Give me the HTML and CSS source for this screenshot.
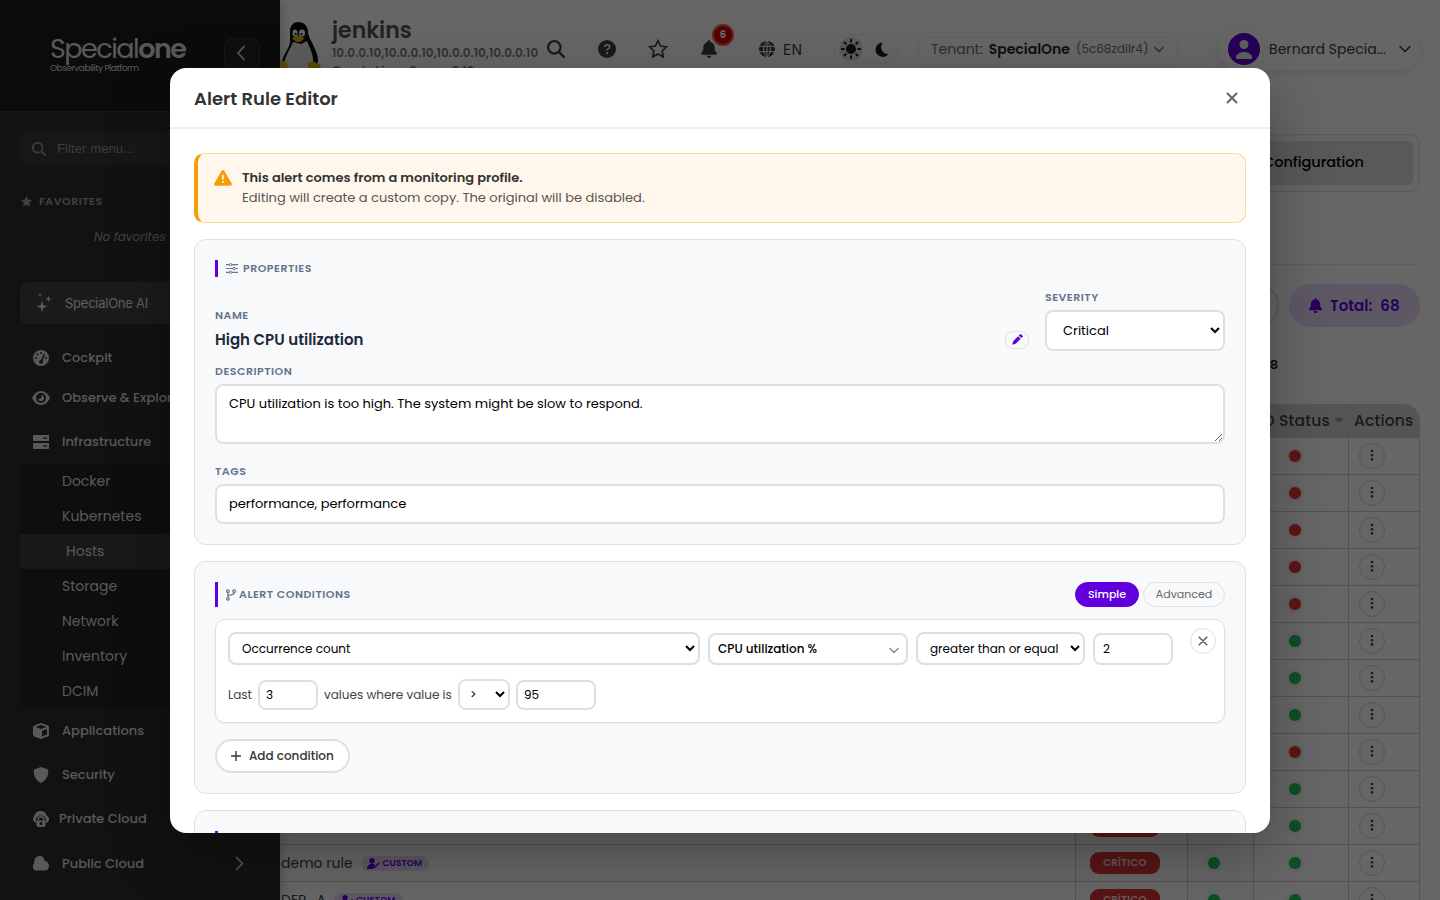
FILE: index.html
```html
<!DOCTYPE html>
<html lang="en">
<head>
    <meta charset="UTF-8">
    <meta name="viewport" content="width=device-width, initial-scale=1.0">
    <title>Alert Rule Editor</title>
    <link rel="stylesheet" href="styles.css">
</head>

<body>

    <svg class="sprite" aria-hidden="true">
        <symbol id="i-search" viewBox="0 0 512 512"><path d="M416 208c0 46-15 88-40 123l127 126c12 13 12 33 0 46s-33 12-46 0L331 376c-35 25-77 40-123 40C93 416 0 323 0 208S93 0 208 0s208 93 208 208zM208 352a144 144 0 1 0 0-288 144 144 0 1 0 0 288z"/></symbol>
        <symbol id="i-bell" viewBox="0 0 448 512"><path d="M224 0c-18 0-32 14-32 32v19C119 66 64 130 64 208v19c0 47-17 92-48 127l-8 9c-8 9-10 23-5 34s16 19 29 19h384c13 0 24-8 29-19s3-25-5-34l-8-9c-31-35-48-80-48-127v-19c0-78-55-142-128-157V32c0-18-14-32-32-32zm45 493c12-12 19-28 19-45H160c0 17 7 33 19 45s28 19 45 19 33-7 45-19z"/></symbol>
        <symbol id="i-x" viewBox="0 0 12 12"><path d="M1.500 1.500l9 9M10.500 1.500l-9 9" fill="none" stroke="currentColor" stroke-width="2" stroke-linecap="round"/></symbol>
        <symbol id="i-down" viewBox="0 0 12 8"><path d="M1 1.500l5 5 5-5" fill="none" stroke="currentColor" stroke-width="1.600" stroke-linecap="round" stroke-linejoin="round"/></symbol>
        <symbol id="i-star" viewBox="0 0 24 24"><path d="M12 2l3.100 6.500 7 .9-5.100 4.900 1.300 7.100L12 18l-6.300 3.400L7 14.300 1.900 9.400l7-.9z"/></symbol>
        <symbol id="i-dots" viewBox="0 0 4 14"><circle cx="2" cy="2" r="1.300"/><circle cx="2" cy="6.200" r="1.300"/><circle cx="2" cy="10.400" r="1.300"/></symbol>
    </svg>

    <div class="layout">
        <aside class="sidebar">
            <div class="sidebar-header">
                <div class="logo">
                    <div class="logo-name">Special<b>one</b></div>
                    <div class="logo-sub">Observability Platform</div>
                </div>
                <button class="collapse"><svg width="10" height="16" viewBox="0 0 10 16"><path d="M8 1.500L2 8l6 6.500" fill="none" stroke="currentColor" stroke-width="1.800" stroke-linecap="round" stroke-linejoin="round"/></svg></button>
            </div>

            <div class="filter">
                <svg width="14" height="14"><use href="#i-search"/></svg>
                <span>Filter menu...</span>
            </div>

            <div class="fav-title"><svg width="13" height="13"><use href="#i-star"/></svg>FAVORITES</div>
            <div class="fav-empty">No favorites yet</div>

            <div class="ai">
                <svg width="18" height="20" viewBox="0 0 18 20"><path d="M7 8l1.300 4.200L12.500 13.500l-4.200 1.300L7 19l-1.300-4.200L1.500 13.500l4.200-1.300zM13.500 3l.8 2.200 2.200.8-2.200.8-.8 2.200-.8-2.200-2.200-.8 2.200-.8zM5 0l.5 1.500L7 2l-1.500.5L5 4l-.5-1.500L3 2l1.500-.5z"/></svg>
                <span>SpecialOne AI</span>
            </div>

            <nav class="menu">
                <a class="item first"><svg width="16" height="16" viewBox="0 0 16 16"><path fill-rule="evenodd" d="M8 0a8 8 0 1 1 0 16A8 8 0 0 1 8 0zM8 2a1 1 0 1 0 0 2 1 1 0 0 0 0-2zM4.300 3.500a1 1 0 1 0 0 2 1 1 0 0 0 0-2zM3 7a1 1 0 1 0 0 2 1 1 0 0 0 0-2zM13 7a1 1 0 1 0 0 2 1 1 0 0 0 0-2zM11 3.600L8.300 9.800a2 2 0 1 0 1.300.7L12.200 4.200z"/></svg><span>Cockpit</span></a>
                <a class="item eye"><svg width="18" height="14" viewBox="0 0 18 14"><path fill-rule="evenodd" d="M9 0c4 0 7 3 9 7-2 4-5 7-9 7s-7-3-9-7c2-4 5-7 9-7zM9 2a5 5 0 1 0 0 10A5 5 0 0 0 9 2zM9 4a3 3 0 1 1-3 3.200A2 2 0 0 0 9 4z"/></svg><span>Observe &amp; Explore</span></a>
                <a class="item"><svg width="16" height="14" viewBox="0 0 16 14"><path fill-rule="evenodd" d="M1 0h14a1 1 0 0 1 1 1v5H0V1a1 1 0 0 1 1-1zM10 2.500v1.300h4V2.500zM0 8h16v5a1 1 0 0 1-1 1H1a1 1 0 0 1-1-1zM10 10.500v1.300h4v-1.300z"/></svg><span>Infrastructure</span></a>
                <div class="submenu">
                    <a>Docker</a>
                    <a>Kubernetes</a>
                    <a class="active">Hosts</a>
                    <a>Storage</a>
                    <a>Network</a>
                    <a>Inventory</a>
                    <a>DCIM</a>
                </div>
                <a class="item apps"><svg width="16" height="16" viewBox="0 0 16 16"><path fill-rule="evenodd" d="M8 0l7 2.500 1 1.500v8l-1 1.500L8 16l-7-2.500L0 12V4l1-1.500zM8 2L2.500 4 8 6l5.500-2zM9 8v5.500l5-1.900V6z"/></svg><span>Applications</span></a>
                <a class="item"><svg width="16" height="16" viewBox="0 0 16 16"><path d="M8 0l7 2.600c1 4.400-1 10.400-7 13.400C2 13 0 7 1 2.600z"/></svg><span>Security</span></a>
                <a class="item private"><svg width="16" height="16" viewBox="0 0 16 16"><path fill-rule="evenodd" d="M3 12a4 4 0 0 1-2-6.500C2 2 4 0 7.500 0S13 2 13.500 4.500C17 6 17 11 13 12V9.500a5 5 0 0 0-10 0zM8 5a3.500 3.500 0 0 1 3.500 3.500v1h1V14c0 1-1 2-2 2h-5c-1 0-2-1-2-2V9.500h1v-1A3.500 3.500 0 0 1 8 5zm0 1.600c-1.200 0-2 .8-2 1.900v1h4v-1c0-1.100-.8-1.900-2-1.900zm0 4.400a1.500 1.500 0 1 0 0 3 1.500 1.500 0 0 0 0-3z"/></svg><span>Private Cloud</span></a>
                <a class="item public"><svg width="16" height="15" viewBox="0 0 16 15"><path d="M4 14.500a4 4 0 0 1-3-7C1 3 3 0 6.500 0s5 2 5 5C14 5 16 7 16 10s-2 4.500-4 4.500z"/></svg><span>Public Cloud</span>
                    <svg class="arrow" width="9" height="15" viewBox="0 0 9 15"><path d="M1.500 1.500l6 6-6 6" fill="none" stroke="currentColor" stroke-width="1.500" stroke-linecap="round"/></svg></a>
            </nav>
        </aside>

        <main class="main">
            <header class="topbar">
                <svg class="tux" width="42" height="50" viewBox="0 0 42 50">
                    <path fill="#0c0c0c" d="M18 0c6 0 10 4 10 10 0 7 10 17 10 29l-2 11H2l-1-8c2-9 9-17 9-22V9c0-5 3-9 8-9z"/>
                    <path fill="#e6e6e6" d="M13 20l8 2 6-3c3 8 7 14 6 22l-5 9H6L4 42c1-8 6-14 9-22z"/>
                    <ellipse cx="15" cy="11" rx="2.500" ry="3.500" fill="#fff"/><ellipse cx="22" cy="11" rx="3" ry="3.500" fill="#fff"/>
                    <circle cx="15.500" cy="12" r="1.200"/><circle cx="21.500" cy="12" r="1.200"/>
                    <path fill="#e8b010" d="M12 16l6-3 7 3-5 4h-4zM0 38l6 2 4 10H0zM28 41l5-2 7 4 2 7H28z"/>
                </svg>
                <div class="host">
                    <h1>jenkins</h1>
                    <p class="ips">10.0.0.10,10.0.0.10,10.0.0.10,10.0.0.10</p>
                    <p class="os">Oracle Linux Server 8.10</p>
                </div>
                <div class="tools">
                    <svg width="18" height="18"><use href="#i-search"/></svg>
                    <svg width="18" height="18" viewBox="0 0 18 18"><circle cx="9" cy="9" r="9"/><path d="M6.700 7c.2-3 4.900-3 4.900-.1C11.600 8.700 9.100 8.600 9.100 10.500" fill="none" stroke="#f5f5f5" stroke-width="1.700"/><circle cx="9.100" cy="13.200" r="1.100" fill="#f5f5f5"/></svg>
                    <svg width="20" height="20" viewBox="0 0 24 24"><path d="M12 2l3.100 6.500 7 .9-5.100 4.900 1.300 7.100L12 18l-6.300 3.400L7 14.300 1.900 9.400l7-.9z" fill="none" stroke="currentColor" stroke-width="2"/></svg>
                    <div class="bell"><svg width="16" height="18"><use href="#i-bell"/></svg><span class="badge">6</span></div>
                </div>
                <div class="lang">
                    <svg width="16" height="16" viewBox="0 0 16 16"><circle cx="8" cy="8" r="8"/><path d="M0 5.300h16M0 10.700h16M8 0v16M8 0C3.500 4 3.500 12 8 16M8 0c4.500 4 4.500 12 0 16" fill="none" stroke="#fff" stroke-width="1"/></svg>
                    <span>EN</span>
                </div>
                <div class="theme">
                    <span class="sun"><svg width="20" height="20" viewBox="0 0 20 20"><circle cx="10" cy="10" r="5"/><path d="M10 .8v2M10 17.200v2M.8 10h2M17.200 10h2M3.500 3.500l1.200 1.200M15.300 15.300l1.200 1.200M3.500 16.500l1.200-1.200M15.300 4.700l1.200-1.200" stroke="currentColor" stroke-width="2" stroke-linecap="round"/></svg></span>
                    <svg width="14" height="15" viewBox="0 0 14 15"><path d="M8 .5A7.200 7.200 0 1 0 13.500 12C7 12.500 4 5 8 .5z"/></svg>
                </div>
                <div class="tenant"><span>Tenant:</span><b>SpecialOne</b><small>(5c68zdilr4)</small><svg width="10" height="7"><use href="#i-down"/></svg></div>
                <div class="user">
                    <span class="avatar"><svg width="16" height="19" viewBox="0 0 16 19"><circle cx="8" cy="4.500" r="4.500"/><path d="M0 18c0-8 16-8 16 0 0 1-.5 1-1 1H1c-.5 0-1 0-1-1z"/></svg></span>
                    <span class="user-name">Bernard Specia...</span>
                    <svg width="12" height="8"><use href="#i-down"/></svg>
                </div>
            </header>

            <div class="tabs"><div class="tab">Configuration</div></div>

            <div class="stats">
                <div class="search-pill"></div>
                <div class="total"><svg width="13" height="15"><use href="#i-bell"/></svg><span>Total:</span><b>68</b></div>
            </div>
            <div class="count">68</div>

            <div class="table">
                <div class="row head"><div></div><div></div><div></div><div class="status-head">IO Status <i></i></div><div>Actions</div></div>
                <div class="row"><div></div><div></div><div></div><div><i class="dot red"></i></div><div><span class="more"><svg width="4" height="14"><use href="#i-dots"/></svg></span></div></div>
                <div class="row"><div></div><div></div><div></div><div><i class="dot red"></i></div><div><span class="more"><svg width="4" height="14"><use href="#i-dots"/></svg></span></div></div>
                <div class="row"><div></div><div></div><div></div><div><i class="dot red"></i></div><div><span class="more"><svg width="4" height="14"><use href="#i-dots"/></svg></span></div></div>
                <div class="row"><div></div><div></div><div></div><div><i class="dot red"></i></div><div><span class="more"><svg width="4" height="14"><use href="#i-dots"/></svg></span></div></div>
                <div class="row"><div></div><div></div><div></div><div><i class="dot red"></i></div><div><span class="more"><svg width="4" height="14"><use href="#i-dots"/></svg></span></div></div>
                <div class="row"><div></div><div></div><div></div><div><i class="dot"></i></div><div><span class="more"><svg width="4" height="14"><use href="#i-dots"/></svg></span></div></div>
                <div class="row"><div></div><div></div><div></div><div><i class="dot"></i></div><div><span class="more"><svg width="4" height="14"><use href="#i-dots"/></svg></span></div></div>
                <div class="row"><div></div><div></div><div></div><div><i class="dot"></i></div><div><span class="more"><svg width="4" height="14"><use href="#i-dots"/></svg></span></div></div>
                <div class="row"><div></div><div></div><div></div><div><i class="dot red"></i></div><div><span class="more"><svg width="4" height="14"><use href="#i-dots"/></svg></span></div></div>
                <div class="row"><div></div><div></div><div></div><div><i class="dot"></i></div><div><span class="more"><svg width="4" height="14"><use href="#i-dots"/></svg></span></div></div>
                <div class="row"><div></div><div><span class="sev">CRÍTICO</span></div><div></div><div><i class="dot"></i></div><div><span class="more"><svg width="4" height="14"><use href="#i-dots"/></svg></span></div></div>
                <div class="row"><div>demo rule <span class="custom"><svg width="13" height="11" viewBox="0 0 13 11"><circle cx="5" cy="2.700" r="2.700"/><path d="M0 11c0-6 7-6 8-4l-2 4zM12 4l1 1-5 5-1.500.5.500-1.500z"/></svg>CUSTOM</span></div><div><span class="sev">CRÍTICO</span></div><div><i class="dot"></i></div><div><i class="dot"></i></div><div><span class="more"><svg width="4" height="14"><use href="#i-dots"/></svg></span></div></div>
                <div class="row"><div>DEP_A <span class="custom"><svg width="13" height="11" viewBox="0 0 13 11"><circle cx="5" cy="2.700" r="2.700"/><path d="M0 11c0-6 7-6 8-4l-2 4zM12 4l1 1-5 5-1.500.5.500-1.500z"/></svg>CUSTOM</span></div><div><span class="sev">CRÍTICO</span></div><div><i class="dot"></i></div><div><i class="dot"></i></div><div><span class="more"><svg width="4" height="14"><use href="#i-dots"/></svg></span></div></div>
            </div>
        </main>
    </div>

    <div class="overlay">
        <div class="modal">
            <div class="modal-header">
                <h2>Alert Rule Editor</h2>
                <button class="close"><svg width="12" height="12"><use href="#i-x"/></svg></button>
            </div>

            <div class="modal-body">
                <div class="notice">
                    <svg width="18" height="16" viewBox="0 0 18 16"><path fill-rule="evenodd" d="M9 0c.5 0 1 .3 1.300.7l7.400 12.700c.6 1.200-.1 2.300-1.300 2.300H1.600c-1.200 0-1.900-1.100-1.300-2.300L7.700.7C8 .3 8.500 0 9 0zM8.200 4.800v4.700h1.600V4.800zM9 10.900a1 1 0 1 0 0 2 1 1 0 0 0 0-2z"/></svg>
                    <div>
                        <strong>This alert comes from a monitoring profile.</strong>
                        <p>Editing will create a custom copy. The original will be disabled.</p>
                    </div>
                </div>

                <section class="section properties">
                    <h3 class="section-title"><svg width="12" height="11" viewBox="0 0 12 11"><path d="M0 1.700h3M6 1.700h6M0 5.500h6.500M9.500 5.500H12M0 9.300h3M6 9.300h6" stroke="currentColor" stroke-width="1.200" stroke-linecap="round"/><g fill="none" stroke="currentColor"><circle cx="4.500" cy="1.700" r="1.200"/><circle cx="8" cy="5.500" r="1.200"/><circle cx="4.500" cy="9.300" r="1.200"/></g></svg>PROPERTIES</h3>
                    <div class="name-row">
                        <div class="name-field">
                            <label>NAME</label>
                            <div class="name-line"><span class="name">High CPU utilization</span>
                                <button class="edit"><svg width="11" height="11" viewBox="0 0 11 11"><path d="M7.800.5c.5-.5 1.100-.5 1.600 0l1 1c.5.500.5 1.100 0 1.600l-1 1L6.800 1.500zM6.100 2.200l2.600 2.600-5 5L.2 10.800l1-3.600z"/></svg></button>
                            </div>
                        </div>
                        <div class="severity">
                            <label>SEVERITY</label>
                            <select><option>Critical</option></select>
                        </div>
                    </div>
                    <label>DESCRIPTION</label>
                    <textarea>CPU utilization is too high. The system might be slow to respond.</textarea>
                    <label class="tags-label">TAGS</label>
                    <input class="tags" type="text" value="performance, performance">
                </section>

                <section class="section conditions">
                    <div class="section-title">
                        <svg width="10" height="12" viewBox="0 0 10 12"><path d="M1.900 3.500v5M1.900 7c0-1.500 6.200 0 6.200-3.500" fill="none" stroke="currentColor" stroke-width="1.300"/><g fill="none" stroke="currentColor" stroke-width="1.200"><circle cx="1.900" cy="2.200" r="1.300"/><circle cx="8.100" cy="2.200" r="1.300"/><circle cx="1.900" cy="9.800" r="1.300"/></g></svg>
                        <span>ALERT CONDITIONS</span>
                        <div class="modes"><button class="mode on">Simple</button><button class="mode">Advanced</button></div>
                    </div>
                    <div class="card">
                        <div class="cond-row">
                            <select class="type"><option>Occurrence count</option></select>
                            <div class="metric"><span>CPU utilization %</span><svg width="10" height="7"><use href="#i-down"/></svg></div>
                            <select class="op"><option>greater than or equal</option></select>
                            <input class="count-val" type="text" value="2">
                            <button class="remove"><svg width="10" height="10"><use href="#i-x"/></svg></button>
                        </div>
                        <div class="last-row">
                            <span class="last">Last</span>
                            <input class="n" type="text" value="3">
                            <span class="where">values where value is</span>
                            <select class="cmp"><option>&gt;</option></select>
                            <input class="v" type="text" value="95">
                        </div>
                    </div>
                    <button class="add"><svg width="10" height="10" viewBox="0 0 10 10"><path d="M5 .5v9M.5 5h9" stroke="currentColor" stroke-width="1.400" stroke-linecap="round"/></svg>Add condition</button>
                </section>

                <section class="section next"><div class="section-title"></div></section>
            </div>
        </div>
    </div>

</body>

</html>
```
FILE: styles.css
```css
* {
    margin: 0;
    padding: 0;
    box-sizing: border-box;
}

body {
    font-family: Poppins, Inter, sans-serif;
    background-color: #fff;
    color: #333;
    height: 900px;
    overflow: hidden;
}

button, input, select, textarea {
    font-family: inherit;
}

svg {
    fill: currentColor;
    flex-shrink: 0;
}

.sprite {
    display: none;
}

.layout {
    display: flex;
    height: 900px;
    overflow: hidden;
}

/* sidebar */
.sidebar {
    width: 280px;
    flex-shrink: 0;
    background-color: #2e2e2e;
    color: #dedede;
    box-shadow: 2px 0 10px rgba(0, 0, 0, 0.2);
}

.sidebar-header {
    display: flex;
    justify-content: space-between;
    height: 112px;
    padding: 36px 20px 0 50px;
    background-color: #1c1c1c;
    border-bottom: 1px solid #3c3c3c;
}

.logo {
    white-space: nowrap;
}

.logo-name {
    font-size: 27px;
    line-height: 26px;
    letter-spacing: -1.500px;
}

.logo-name b {
    font-weight: 600;
}

.logo-sub {
    font-size: 9px;
    line-height: 12px;
    letter-spacing: -0.500px;
}

.collapse {
    width: 36px;
    height: 36px;
    margin-top: 2px;
    padding-right: 2px;
    background-color: #262626;
    border: 1px solid #3a3a3a;
    border-radius: 8px;
    color: #ddd;
}

.filter {
    display: flex;
    align-items: center;
    gap: 11px;
    height: 33px;
    margin: 20px 20px 0;
    padding-left: 12px;
    background-color: #3a3a3a;
    border-radius: 8px;
    font-family: "Liberation Sans", sans-serif;
    font-size: 13px;
    letter-spacing: 0.100px;
    color: #999;
}

.fav-title {
    display: flex;
    align-items: center;
    gap: 6px;
    height: 20px;
    margin: 26px 20px 0;
    font-size: 11px;
    font-weight: 600;
    letter-spacing: 0.500px;
    color: #a0a0a0;
}

.fav-empty {
    margin-top: 16px;
    padding-left: 94px;
    font-size: 12px;
    line-height: 20px;
    font-style: italic;
    color: #a0a0a0;
}

.ai {
    display: flex;
    align-items: center;
    gap: 12px;
    height: 42px;
    margin: 35px 20px 0;
    padding-left: 15px;
    background-color: #454545;
    border-radius: 8px;
    font-family: Inter, sans-serif;
    font-size: 13px;
    letter-spacing: -0.250px;
    color: #e5e5e5;
}

.menu {
    padding: 15px 20px 0;
    font-size: 14px;
}

.item {
    display: flex;
    align-items: center;
    height: 44px;
    padding: 1px 0 0 13px;
    font-size: 13px;
    font-weight: 500;
}

.item svg {
    width: 16px;
    margin-right: 13px;
}

.item.first {
    height: 36px;
}

.item.eye {
    padding-left: 12px;
}

.item.eye svg {
    width: 18px;
    margin-right: 12px;
}

.item.apps {
    height: 43px;
    padding-top: 0;
}

.item.private svg {
    margin-right: 10px;
}

.item.public {
    margin-top: 1px;
}

.item .arrow {
    width: 9px;
    margin: 0 16px 0 auto;
}

.submenu {
    margin-top: 1px;
    background-color: #242424;
    border-radius: 8px;
    overflow: hidden;
}

.submenu a {
    display: block;
    height: 35px;
    padding-left: 42px;
    line-height: 35px;
}

.submenu .active {
    padding-left: 46px;
    background-color: #3c3c3c;
}

/* page behind the editor */
.main {
    flex: 1;
    min-width: 0;
    padding-right: 20px;
}

.topbar {
    display: flex;
    height: 98px;
    padding-top: 17px;
    color: #404040;
}

.tux {
    margin-top: 5px;
}

.host {
    width: 225px;
    padding-left: 10px;
    white-space: nowrap;
}

.host h1 {
    font-size: 22px;
    font-weight: 600;
    line-height: 28px;
    color: #555;
}

.host p {
    font-size: 12px;
    font-weight: 600;
    line-height: 16px;
    letter-spacing: 0.020px;
    color: #808080;
}

.host .os {
    line-height: 20px;
}

.tools {
    display: flex;
    align-items: center;
    gap: 33px;
    height: 64px;
}

.tools > svg:nth-child(3) {
    margin-left: -1px;
}

.bell {
    position: relative;
    height: 18px;
}

.badge {
    position: absolute;
    top: -25px;
    left: 11px;
    width: 22px;
    height: 22px;
    margin-top: 9px;
    border: 2px solid #ff5555;
    border-radius: 50%;
    background-color: #d80000;
    color: #fff;
    font-size: 10px;
    font-weight: 700;
    line-height: 18px;
    text-align: center;
}

.lang {
    display: flex;
    align-items: center;
    gap: 8px;
    height: 64px;
    margin-left: 42px;
    font-family: Inter, sans-serif;
    font-size: 14px;
}

.theme {
    display: flex;
    align-items: center;
    gap: 12px;
    width: 64px;
    height: 30px;
    margin: 17px 0 0 32px;
    padding-left: 4px;
    border: 1px solid #f2f2f2;
    border-radius: 15px;
    color: #1a1a2a;
}

.sun {
    display: flex;
    align-items: center;
    justify-content: center;
    width: 24px;
    height: 24px;
    background-color: #e2e2e2;
    border-radius: 50%;
}

.tenant {
    display: flex;
    align-items: center;
    gap: 6px;
    width: 260px;
    height: 34px;
    margin: 15px 0 0 20px;
    padding-left: 12px;
    border: 1px solid #f0f0f2;
    border-radius: 8px;
    font-size: 14px;
    color: #64748b;
    white-space: nowrap;
}

.tenant b {
    color: #1e293b;
    font-weight: 600;
}

.tenant small {
    font-size: 12px;
}

.user {
    display: flex;
    align-items: center;
    width: 202px;
    height: 42px;
    margin: 11px 0 0 auto;
    padding-left: 10px;
    border-radius: 21px;
    box-shadow: 0 2px 8px rgba(0, 0, 0, 0.1);
    font-size: 14px;
    white-space: nowrap;
}

.avatar {
    display: flex;
    align-items: center;
    justify-content: center;
    width: 32px;
    height: 32px;
    margin-right: 9px;
    background-color: #6200dd;
    border-radius: 50%;
    color: #f0f0f0;
}

.user-name {
    width: 130px;
    letter-spacing: 0.050px;
}

.tabs {
    height: 58px;
    margin-top: 36px;
    padding: 6px;
    border: 1px solid #dde2ea;
    border-radius: 10px;
    background-color: #f8f9fb;
}

.tab {
    height: 44px;
    margin-left: 680px;
    padding-right: 49px;
    background-color: #dedede;
    border-radius: 6px;
    color: #000;
    font-size: 14.500px;
    font-weight: 500;
    line-height: 42px;
    text-align: right;
}

.stats {
    display: flex;
    justify-content: flex-end;
    gap: 10px;
    height: 63px;
    margin-top: 72px;
    padding-top: 19px;
    border-top: 1px solid #e5e5e5;
}

.search-pill {
    width: 300px;
    height: 43px;
    border: 2px solid #e0e0e0;
    border-radius: 22px;
}

.total {
    display: flex;
    align-items: center;
    width: 131px;
    height: 43px;
    padding-left: 20px;
    background-color: #e9dcfa;
    border-radius: 22px;
    color: #6200dd;
    font-size: 15px;
    font-weight: 600;
}

.total span {
    margin: 0 8px 0 8px;
}

.total b {
    font-weight: 600;
}

.count {
    height: 20px;
    margin: 28px 142px 0 0;
    font-size: 13px;
    font-weight: 600;
    line-height: 20px;
    text-align: right;
    color: #1e293b;
}

.table {
    margin-top: 29px;
    border-right: 1px solid #d5d5d5;
    border-radius: 0 16px 0 0;
    overflow: hidden;
}

.row {
    display: grid;
    grid-template-columns: 796px 112px 66px 95px 70px;
    height: 37px;
    border-bottom: 1px solid #ccc;
    font-size: 14px;
    color: #444;
}

.row div {
    display: flex;
    align-items: center;
    padding-left: 14px;
    border-right: 1px solid #ccc;
    white-space: nowrap;
}

.row div:first-child {
    padding-left: 1px;
}

.row div:nth-child(3) {
    padding-left: 20px;
}

.row div:nth-child(4) {
    padding-left: 35px;
}

.row div:last-child {
    padding-left: 10px;
    border-right: none;
}

.row.head {
    height: 34px;
    background-color: #d4d4d4;
    font-size: 15.500px;
    font-weight: 500;
    letter-spacing: 0.200px;
}

.row.head .status-head {
    justify-content: flex-end;
    padding: 0 4px 0 0;
}

.row.head div:last-child {
    padding-left: 5px;
}

.status-head i {
    margin-left: 4px;
    border: 5px solid transparent;
    border-top-color: #999;
    border-bottom: none;
}

.dot {
    width: 12px;
    height: 12px;
    border-radius: 50%;
    background-color: #22c55e;
    box-shadow: 0 0 5px rgba(34, 197, 94, 0.3);
}

.dot.red {
    background-color: #e53935;
    box-shadow: 0 0 5px rgba(229, 57, 53, 0.3);
}

.more {
    display: flex;
    align-items: center;
    justify-content: center;
    width: 26px;
    height: 26px;
    border: 1px solid #d4d4d4;
    border-radius: 50%;
}

.sev {
    width: 70px;
    height: 22px;
    border-radius: 9px;
    background-color: #dc3535;
    color: #f5e0e0;
    font-size: 10px;
    font-weight: 600;
    line-height: 21px;
    letter-spacing: 0.400px;
    text-align: center;
}

.custom {
    display: flex;
    align-items: center;
    gap: 3px;
    height: 15px;
    margin-left: 8px;
    padding: 0 7px 0 6px;
    border-radius: 8px;
    background-color: #e9dcfa;
    color: #6200dd;
    font-size: 9px;
    font-weight: 600;
    letter-spacing: 0.100px;
}

/* modal */
.overlay {
    position: absolute;
    inset: 0;
    display: flex;
    align-items: center;
    justify-content: center;
    background-color: rgba(0, 0, 0, 0.6);
}

.modal {
    display: flex;
    flex-direction: column;
    width: 1100px;
    height: 765px;
    background-color: #fff;
    border-radius: 16px;
    box-shadow: 0 20px 60px rgba(0, 0, 0, 0.3);
    overflow: hidden;
}

.modal-header {
    display: flex;
    align-items: center;
    justify-content: space-between;
    height: 61.500px;
    flex-shrink: 0;
    padding: 2px 32px 0 24px;
    border-bottom: 2px solid #eee;
}

.modal-header h2 {
    font-size: 18px;
    font-weight: 600;
}

.close {
    display: flex;
    border: none;
    background: none;
    color: #666;
}

.modal-body {
    flex: 1;
    padding: 24px 24px 0;
    overflow: hidden;
}

.notice {
    display: flex;
    gap: 10px;
    height: 70px;
    padding: 14px 16px;
    background-color: #fff7eb;
    border: 1px solid #fad999;
    border-left: 4px solid #f59e0b;
    border-radius: 10px;
    font-size: 13px;
    line-height: 20px;
}

.notice svg {
    margin-top: 2px;
    color: #f59e0b;
}

.notice strong {
    display: block;
    font-weight: 600;
}

.notice p {
    color: #555;
}

.section {
    margin-top: 16px;
    padding: 20px;
    background-color: #f8f9fb;
    border: 1px solid #e0e0e0;
    border-radius: 12px;
}

.properties {
    height: 306px;
}

.conditions {
    height: 233px;
}

.next {
    height: 100px;
}

.section-title {
    display: flex;
    align-items: center;
    gap: 5px;
    height: 17px;
    padding-left: 8px;
    border-left: 3px solid #6200dd;
    font-size: 11px;
    font-weight: 600;
    letter-spacing: 0.500px;
    color: #64748b;
}

.conditions .section-title {
    gap: 3px;
    height: 25px;
}

label {
    display: block;
    font-size: 11px;
    font-weight: 600;
    line-height: 17px;
    letter-spacing: 0.500px;
    color: #64748b;
}

input, select, textarea, .metric {
    border: 2px solid #e0e0e0;
    border-radius: 8px;
    background-color: #fff;
    color: #000;
    font-size: 13px;
    outline: none;
}

.name-row {
    display: flex;
    align-items: flex-end;
    gap: 16px;
    height: 74px;
    margin-bottom: 12px;
}

.name-field {
    flex: 1;
}

.name-line {
    display: flex;
    align-items: center;
    justify-content: space-between;
    height: 23px;
    margin-top: 4px;
}

.name {
    font-size: 15px;
    font-weight: 600;
    color: #1e293b;
}

.edit {
    display: flex;
    align-items: center;
    justify-content: center;
    width: 24px;
    height: 18px;
    border: 1px solid #e0e0e0;
    border-radius: 8px;
    background-color: #f8f9fb;
    color: #6200dd;
}

.severity select {
    display: block;
    width: 180px;
    height: 41px;
    margin-top: 4px;
    padding-left: 12px;
}

textarea {
    display: block;
    width: 100%;
    height: 60px;
    margin-top: 4px;
    padding: 8px 12px;
    line-height: 19px;
    resize: vertical;
}

.tags-label {
    margin-top: 19px;
}

.tags {
    width: 100%;
    height: 40px;
    margin-top: 4px;
    padding: 0 12px;
}

.modes {
    display: flex;
    gap: 4px;
    margin-left: auto;
}

.mode {
    width: 82px;
    height: 25px;
    border: 1px solid #e0e0e0;
    border-radius: 13px;
    background: none;
    color: #666;
    font-size: 11px;
}

.mode.on {
    width: 64px;
    border-color: #6200dd;
    background-color: #6200dd;
    color: #fff;
    font-weight: 500;
}

.card {
    height: 104px;
    margin-top: 12px;
    padding: 12px 8px 12px 12px;
    background-color: #fff;
    border: 1px solid #e0e0e0;
    border-radius: 10px;
    box-shadow: 0 1px 3px rgba(0, 0, 0, 0.05);
}

.cond-row {
    display: flex;
    align-items: flex-end;
    gap: 8px;
    height: 33px;
}

.cond-row select, .cond-row input, .metric, .last-row input, .last-row select {
    font-size: 12px;
}

.cond-row select {
    height: 33px;
    padding-left: 8px;
}

.type {
    width: 472px;
}

.metric {
    display: flex;
    align-items: center;
    justify-content: space-between;
    width: 200px;
    height: 32px;
    padding: 0 7px 0 8px;
    font-weight: 500;
}

.metric svg {
    margin-top: 2px;
    color: #888;
}

.op {
    width: 169px;
}

.count-val {
    width: 80px;
    height: 32px;
    padding-left: 8px;
}

.remove {
    display: flex;
    align-items: center;
    justify-content: center;
    width: 26px;
    height: 26px;
    margin: 0 0 11px auto;
    border: 1px solid #e0e0e0;
    border-radius: 50%;
    background-color: #fff;
    color: #666;
}

.last-row {
    display: flex;
    align-items: flex-end;
    gap: 6px;
    height: 31px;
    margin-top: 14px;
    font-size: 12px;
    line-height: 30px;
    color: #444;
}

.last {
    width: 24px;
}

.where {
    width: 128px;
    white-space: nowrap;
}

.last-row input {
    width: 80px;
    height: 30px;
    padding-left: 6px;
}

.last-row .n {
    width: 60px;
}

.cmp {
    width: 52px;
    height: 31px;
    padding-left: 6px;
}

.add {
    display: flex;
    align-items: center;
    gap: 8px;
    width: 135px;
    height: 34px;
    margin-top: 16px;
    padding-left: 14px;
    border: 2px solid #e0e0e0;
    border-radius: 17px;
    background-color: #fff;
    color: #333;
    font-size: 12px;
    font-weight: 500;
}
```
